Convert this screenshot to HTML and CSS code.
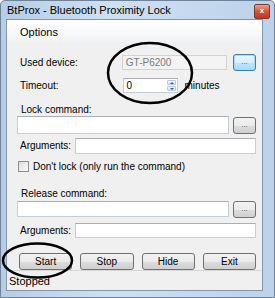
FILE: index.html
```html
<!DOCTYPE html>
<html lang="en">

<head>
  <meta charset="UTF-8" />
  <title>BtProx - Bluetooth Proximity Lock</title>
  <meta name="viewport" content="width=device-width, initial-scale=1.0" />
  <link rel="stylesheet" href="styles.css">
</head>

<body>
  <div class="window">
    <div class="titlebar">
      <span class="title">BtProx - Bluetooth Proximity Lock</span>
      <span class="close">x</span>
    </div>

    <div class="client">
      <!-- menu -->
      <div class="menu"><span>Options</span></div>

      <div class="content">
        <div class="row row-device">
          <span class="label">Used device:</span>
          <span class="textbox disabled device-box">GT-P6200</span>
          <button class="btn browse focused">...</button>
        </div>

        <div class="row row-timeout">
          <span class="label">Timeout:</span>
          <span class="textbox numeric">0
            <span class="spin"><i class="up"></i><i class="down"></i></span>
          </span>
          <span class="unit">minutes</span>
        </div>

        <div class="row row-caption">Lock command:</div>
        <div class="row row-cmd">
          <span class="textbox cmd-box"></span>
          <button class="btn browse">...</button>
        </div>
        <div class="row row-args">
          <span class="label args-label">Arguments:</span>
          <span class="textbox args-box"></span>
        </div>

        <div class="row row-check">
          <span class="checkbox"></span>
          <span class="check-label">Don't lock (only run the command)</span>
        </div>

        <div class="row row-caption release">Release command:</div>
        <div class="row row-cmd release-cmd">
          <span class="textbox cmd-box"></span>
          <button class="btn browse">...</button>
        </div>
        <div class="row row-args release-args">
          <span class="label args-label">Arguments:</span>
          <span class="textbox args-box"></span>
        </div>

        <div class="row row-buttons">
          <button class="btn action">Start</button>
          <button class="btn action">Stop</button>
          <button class="btn action">Hide</button>
          <button class="btn action">Exit</button>
        </div>
      </div>

      <div class="statusbar">Stopped</div>
    </div>

    <!-- hand drawn marks over the screenshot -->
    <svg class="marks" width="275" height="298" viewBox="0 0 275 298">
      <ellipse cx="150" cy="73" rx="42" ry="30" />
      <ellipse cx="37.5" cy="260.5" rx="34.5" ry="17" />
    </svg>
  </div>
</body>

</html>
```

FILE: styles.css
```css
body {
  margin: 0;
  padding: 0;
  background: #fff;
  font-family: "Liberation Sans", Arial, sans-serif;
  font-size: 10px;
  color: #000;
}

.window {
  position: relative;
  width: 275px;
  height: 298px;
  box-sizing: border-box;
  padding: 0 11px 6px 5px;
  background: linear-gradient(90deg, #b7cde6 0%, #cfe0f2 40%, #bcd2ea 100%);
  border: 1px solid #6f8299;
  border-radius: 5px 5px 0 0;
  display: flex;
  flex-direction: column;
}

.titlebar {
  height: 18px;
  display: flex;
  align-items: center;
  justify-content: space-between;
  font-size: 11px;
  padding-left: 1px;
}

.close {
  width: 14px;
  height: 13px;
  margin-right: -7px;
  margin-top: 2px;
  border: 1px solid #7d3a2c;
  border-radius: 2px;
  background: linear-gradient(#e9a48f, #d2553a 50%, #c0391f);
  color: #fff;
  font-size: 8px;
  font-weight: bold;
  line-height: 12px;
  text-align: center;
}

.client {
  flex: 1;
  background: #f0f0f0;
  border: 1px solid #8396ad;
  display: flex;
  flex-direction: column;
}

.menu {
  height: 23px;
  background: linear-gradient(#ffffff, #f7f8fa 70%, #f0f0f0);
  display: flex;
  align-items: center;
  padding-left: 13px;
  font-size: 11px;
}

.content {
  padding: 0 6px 0 10px;
  display: flex;
  flex-direction: column;
}

.row {
  display: flex;
  align-items: center;
}

.label {
  padding-left: 3px;
}

.textbox {
  box-sizing: border-box;
  background: #fff;
  border: 1px solid #c5cdd6;
  border-top-color: #abadb3;
  display: flex;
  align-items: center;
  padding-left: 3px;
}

.textbox.disabled {
  background: #f4f4f4;
  border-color: #d2d2d2;
  color: #7a7a7a;
}

.btn {
  box-sizing: border-box;
  margin: 0;
  padding: 0;
  border: 1px solid #707070;
  border-radius: 3px;
  background: linear-gradient(#f2f2f2 0%, #ebebeb 50%, #dddddd 51%, #cfcfcf 100%);
  font-family: "Liberation Sans", Arial, sans-serif;
  font-size: 10px;
  color: #000;
}

.browse {
  width: 23px;
  height: 17px;
  margin-left: auto;
  color: #555;
  font-size: 8px;
  line-height: 8px;
}

.browse.focused {
  border-color: #3c7fb1;
  box-shadow: inset 0 0 0 1px #a9d9f5;
  background: linear-gradient(#eaf6fd 0%, #d9f0fc 50%, #bee6fd 51%, #a7d9f5 100%);
}

.row-device {
  margin-top: 11px;
  height: 16px;
}

.device-box {
  width: 105px;
  height: 15px;
  margin-left: 44px;
}

.row-timeout {
  margin-top: 8px;
  height: 14px;
}

.numeric {
  position: relative;
  width: 55px;
  height: 15px;
  margin-left: 64px;
}

.spin {
  position: absolute;
  right: 1px;
  top: 1px;
  bottom: 1px;
  width: 9px;
  display: flex;
  flex-direction: column;
  gap: 1px;
}

.spin i {
  flex: 1;
  background: linear-gradient(#f3f8fc, #d8e6f2);
  border: 1px solid #b9c9d8;
  border-radius: 1px;
  position: relative;
}

.spin i::after {
  content: "";
  position: absolute;
  left: 2px;
  top: 1px;
  border-left: 2px solid transparent;
  border-right: 2px solid transparent;
}

.spin .up::after {
  border-bottom: 2px solid #3a5f8a;
}

.spin .down::after {
  border-top: 2px solid #3a5f8a;
}

.unit {
  margin-left: 7px;
}

.row-caption {
  margin-top: 11px;
  height: 12px;
  padding-left: 4px;
}

.row-cmd {
  margin-top: 1px;
  height: 18px;
}

.cmd-box {
  width: 212px;
  height: 18px;
}

.row-args {
  margin-top: 4px;
  height: 15px;
}

.args-label {
  width: 57px;
  box-sizing: border-box;
}

.args-box {
  width: 181px;
  height: 16px;
  margin-left: auto;
}

.row-check {
  margin-top: 8px;
  height: 10px;
}

.checkbox {
  box-sizing: border-box;
  width: 11px;
  height: 11px;
  margin-left: 1px;
  border: 1px solid #8e8f8f;
  background: linear-gradient(135deg, #dcdcdc, #fbfbfb);
}

.check-label {
  margin-left: 4px;
}

.release {
  margin-top: 16px;
}

.release-cmd {
  margin-top: 2px;
  height: 16px;
}

.release-cmd .cmd-box {
  height: 16px;
}

.release-args {
  margin-top: 6px;
  height: 14px;
}

.release-args .args-box {
  height: 15px;
}

.row-buttons {
  margin-top: 16px;
  height: 17px;
  padding-left: 2px;
  gap: 8px;
}

.action {
  width: 56px;
  height: 17px;
}

.statusbar {
  margin-top: auto;
  height: 19px;
  border-top: 1px solid #d7d7d7;
  display: flex;
  align-items: center;
  padding-left: 2px;
  font-size: 11px;
}

.marks {
  position: absolute;
  left: -1px;
  top: -1px;
  pointer-events: none;
}

.marks ellipse {
  fill: none;
  stroke: #000;
  stroke-width: 2.5;
}
```
